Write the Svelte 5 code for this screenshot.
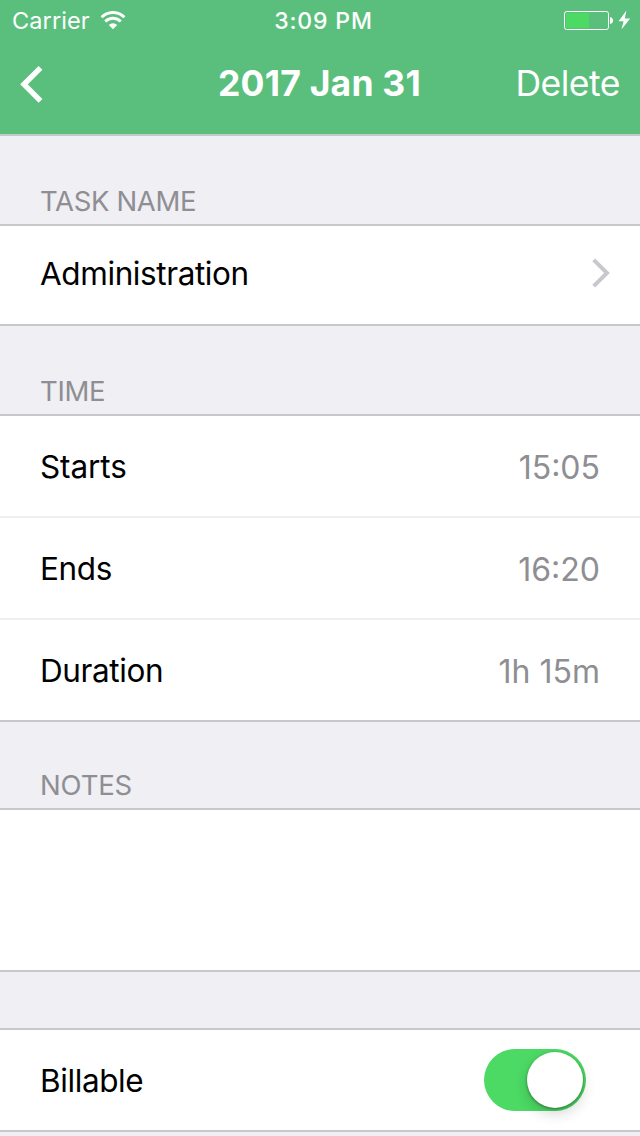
<script>
  const times = [
    { label: 'Starts', value: '15:05', cls: 'starts' },
    { label: 'Ends', value: '16:20', cls: 'ends' },
    { label: 'Duration', value: '1h 15m', cls: 'duration' }
  ];
</script>

<div class="screen">
  <header>
    <div class="status">
      <div class="carrier">
        <span>Carrier</span>
        <svg width="26" height="20" viewBox="0 0 26 20">
          <g fill="none" stroke="#fff" stroke-width="2.9">
            <path d="M1.6 6.3A15.8 15.8 0 0 1 24.4 6.3" />
            <path d="M5.3 10.5A10.7 10.7 0 0 1 20.7 10.5" />
          </g>
          <path d="M8.8 14A6 6 0 0 1 17.2 14L13 18.3Z" fill="#fff" />
        </svg>
      </div>
      <div class="clock">3:09 PM</div>
      <svg class="battery" width="68" height="22" viewBox="0 0 68 22">
        <rect x="0.5" y="1.5" width="44" height="18" rx="2.2" fill="none" stroke="#fff" />
        <path d="M2 3H25V18H3Q2 18 2 17Z" fill="#4cd964" />
        <path d="M46 7Q49 7.5 49 10.5T46 14Z" fill="#fff" />
        <path d="M62.4 0.6L54.6 11.3H59.6L57.4 19.6L66.2 8.6H60.8Z" fill="#fff" />
      </svg>
    </div>
    <nav>
      <button class="back" aria-label="Back">
        <svg width="26" height="40" viewBox="0 0 26 40">
          <path d="M21.5 3.8L5 20.3L21.5 36.8" fill="none" stroke="#fff" stroke-width="5.4" />
        </svg>
      </button>
      <h1>2017 Jan 31</h1>
      <button class="delete">Delete</button>
    </nav>
  </header>

  <h2 class="task">TASK NAME</h2>
  <section>
    <div class="row pick">
      <span class="admin">Administration</span>
      <svg width="20" height="32" viewBox="0 0 20 32">
        <path d="M2.7 2.8L16 16L2.7 29.2" fill="none" stroke="#c7c7cc" stroke-width="4" />
      </svg>
    </div>
  </section>

  <h2 class="time">TIME</h2>
  <section>
    {#each times as item}
      <div class="row {item.cls}">
        <span class="label">{item.label}</span>
        <span class="value">{item.value}</span>
      </div>
    {/each}
  </section>

  <h2 class="notes-title">NOTES</h2>
  <section class="notes"></section>

  <section class="billing">
    <div class="row">
      <span class="billable">Billable</span>
      <div class="switch" role="switch" aria-checked="true" aria-label="Billable" tabindex="0"><i></i></div>
    </div>
  </section>
</div>

<style>
  :global(body) { margin: 0; background: #efeff4; }
  .screen {
    width: 640px;
    height: 1136px;
    overflow: hidden;
    box-sizing: border-box;
    background: #efeff4;
    font-family: Inter, sans-serif;
    color: #000;
    display: flex;
    flex-direction: column;
  }
  svg { display: block; flex: none; }
  header {
    height: 134px;
    flex: none;
    background: #5abf7d;
    border-bottom: 2px solid #c8c7cc;
    color: #fff;
  }
  .status {
    height: 40px;
    display: grid;
    grid-template-columns: 1fr auto 1fr;
    align-items: center;
    padding: 0 8px 0 12px;
    box-sizing: border-box;
    font-size: 23.5px;
    line-height: 40px;
  }
  .carrier { display: flex; align-items: center; gap: 10px; font-weight: 400; letter-spacing: 0.1px; padding-top: 1px; }
  .clock { font-weight: 500; font-size: 23px; letter-spacing: 0.85px; padding: 1px 0 0 3px; }
  .battery { justify-self: end; }
  nav {
    height: 88px;
    display: grid;
    grid-template-columns: 1fr auto 1fr;
    align-items: center;
    padding: 0 20px 0 19px;
  }
  button { border: 0; background: none; padding: 0; color: inherit; font: inherit; }
  .back { justify-self: start; }
  h1 { margin: 0; font-size: 35.5px; line-height: 42px; font-weight: 700; letter-spacing: 0.2px; }
  .delete { justify-self: end; font-size: 35.5px; line-height: 42px; font-weight: 400; letter-spacing: -0.5px; }
  h2 {
    margin: 0;
    height: 88px;
    flex: none;
    box-sizing: border-box;
    padding: 49px 0 0 40px;
    font-size: 27.5px;
    line-height: 32px;
    font-weight: 400;
    letter-spacing: -0.35px;
    color: #8e8e93;
  }
  .notes-title { height: 86px; padding-top: 47px; letter-spacing: -0.15px; }
  section {
    flex: none;
    background: #fff;
    border-top: 2px solid #c8c7cc;
    border-bottom: 2px solid #c8c7cc;
  }
  .row {
    height: 100px;
    display: flex;
    align-items: center;
    justify-content: space-between;
    padding: 0 40px;
    font-size: 32px;
    line-height: 40px;
  }
  .row + .row { border-top: 2px solid #efeff2; }
  .row > span:first-child { font-size: 31.5px; letter-spacing: -0.4px; }
  .starts > span:first-child { letter-spacing: -0.1px; }
  .row > span { padding-top: 2px; }
  .row > .value { padding-top: 3px; color: #8e8e93; }
  .pick { height: 98px; padding-right: 29px; padding-bottom: 4px; box-sizing: border-box; }
  .notes { height: 160px; }
  .billing { margin-top: 56px; }
  .billing .row { padding-right: 54px; }
  .switch {
    width: 102px;
    height: 62px;
    border-radius: 31px;
    background: #4cd964;
    display: flex;
    align-items: center;
    justify-content: flex-end;
    padding-right: 3px;
    box-sizing: border-box;
  }
  .switch i {
    width: 56px;
    height: 56px;
    border-radius: 50%;
    background: #fff;
    box-shadow: 0 1px 3px rgba(0, 0, 0, 0.4), 0 6px 14px rgba(0, 0, 0, 0.16);
  }
</style>
